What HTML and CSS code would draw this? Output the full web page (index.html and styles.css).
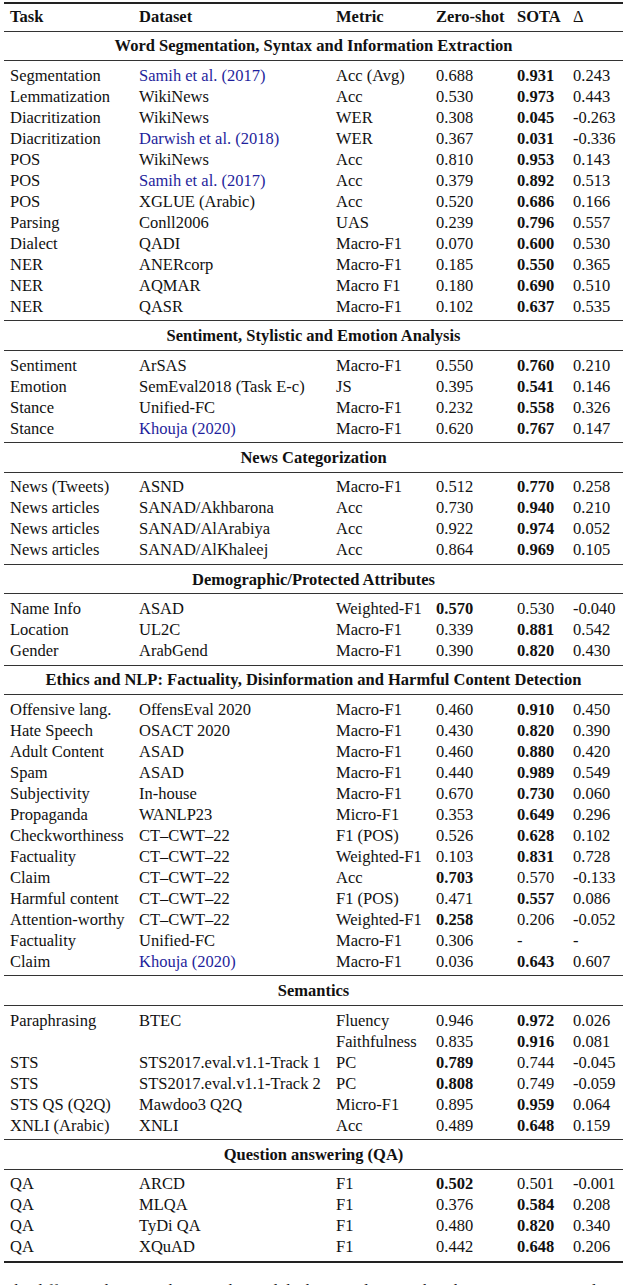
FILE: index.html
```html
<!DOCTYPE html>
<html lang="en">
<head>
<meta charset="utf-8">
<title>Results table</title>
<link rel="stylesheet" href="styles.css">
</head>
<body>
<div class="page">
<table class="results">
  <colgroup>
    <col class="c-task"><col class="c-data"><col class="c-metric"><col class="c-zero"><col class="c-sota"><col class="c-delta">
  </colgroup>
  <thead>
    <tr class="head"><th>Task</th><th>Dataset</th><th>Metric</th><th>Zero-shot</th><th>SOTA</th><th class="delta">Δ</th></tr>
  </thead>
  <tbody>
    <tr class="sec"><td colspan="6">Word Segmentation, Syntax and Information Extraction</td></tr>
    <tr class="first"><td>Segmentation</td><td><span class="cite">Samih et al. (2017)</span></td><td>Acc (Avg)</td><td>0.688</td><td><b>0.931</b></td><td>0.243</td></tr>
    <tr><td>Lemmatization</td><td>WikiNews</td><td>Acc</td><td>0.530</td><td><b>0.973</b></td><td>0.443</td></tr>
    <tr><td>Diacritization</td><td>WikiNews</td><td>WER</td><td>0.308</td><td><b>0.045</b></td><td>-0.263</td></tr>
    <tr><td>Diacritization</td><td><span class="cite">Darwish et al. (2018)</span></td><td>WER</td><td>0.367</td><td><b>0.031</b></td><td>-0.336</td></tr>
    <tr><td>POS</td><td>WikiNews</td><td>Acc</td><td>0.810</td><td><b>0.953</b></td><td>0.143</td></tr>
    <tr><td>POS</td><td><span class="cite">Samih et al. (2017)</span></td><td>Acc</td><td>0.379</td><td><b>0.892</b></td><td>0.513</td></tr>
    <tr><td>POS</td><td>XGLUE (Arabic)</td><td>Acc</td><td>0.520</td><td><b>0.686</b></td><td>0.166</td></tr>
    <tr><td>Parsing</td><td>Conll2006</td><td>UAS</td><td>0.239</td><td><b>0.796</b></td><td>0.557</td></tr>
    <tr><td>Dialect</td><td>QADI</td><td>Macro-F1</td><td>0.070</td><td><b>0.600</b></td><td>0.530</td></tr>
    <tr><td>NER</td><td>ANERcorp</td><td>Macro-F1</td><td>0.185</td><td><b>0.550</b></td><td>0.365</td></tr>
    <tr><td>NER</td><td>AQMAR</td><td>Macro F1</td><td>0.180</td><td><b>0.690</b></td><td>0.510</td></tr>
    <tr class="last"><td>NER</td><td>QASR</td><td>Macro-F1</td><td>0.102</td><td><b>0.637</b></td><td>0.535</td></tr>

    <tr class="sec"><td colspan="6">Sentiment, Stylistic and Emotion Analysis</td></tr>
    <tr class="first"><td>Sentiment</td><td>ArSAS</td><td>Macro-F1</td><td>0.550</td><td><b>0.760</b></td><td>0.210</td></tr>
    <tr><td>Emotion</td><td>SemEval2018 (Task E-c)</td><td>JS</td><td>0.395</td><td><b>0.541</b></td><td>0.146</td></tr>
    <tr><td>Stance</td><td>Unified-FC</td><td>Macro-F1</td><td>0.232</td><td><b>0.558</b></td><td>0.326</td></tr>
    <tr class="last"><td>Stance</td><td><span class="cite">Khouja (2020)</span></td><td>Macro-F1</td><td>0.620</td><td><b>0.767</b></td><td>0.147</td></tr>

    <tr class="sec"><td colspan="6">News Categorization</td></tr>
    <tr class="first"><td>News (Tweets)</td><td>ASND</td><td>Macro-F1</td><td>0.512</td><td><b>0.770</b></td><td>0.258</td></tr>
    <tr><td>News articles</td><td>SANAD/Akhbarona</td><td>Acc</td><td>0.730</td><td><b>0.940</b></td><td>0.210</td></tr>
    <tr><td>News articles</td><td>SANAD/AlArabiya</td><td>Acc</td><td>0.922</td><td><b>0.974</b></td><td>0.052</td></tr>
    <tr class="last"><td>News articles</td><td>SANAD/AlKhaleej</td><td>Acc</td><td>0.864</td><td><b>0.969</b></td><td>0.105</td></tr>

    <tr class="sec"><td colspan="6">Demographic/Protected Attributes</td></tr>
    <tr class="first"><td>Name Info</td><td>ASAD</td><td>Weighted-F1</td><td><b>0.570</b></td><td>0.530</td><td>-0.040</td></tr>
    <tr><td>Location</td><td>UL2C</td><td>Macro-F1</td><td>0.339</td><td><b>0.881</b></td><td>0.542</td></tr>
    <tr class="last"><td>Gender</td><td>ArabGend</td><td>Macro-F1</td><td>0.390</td><td><b>0.820</b></td><td>0.430</td></tr>

    <tr class="sec"><td colspan="6">Ethics and NLP: Factuality, Disinformation and Harmful Content Detection</td></tr>
    <tr class="first"><td>Offensive lang.</td><td>OffensEval 2020</td><td>Macro-F1</td><td>0.460</td><td><b>0.910</b></td><td>0.450</td></tr>
    <tr><td>Hate Speech</td><td>OSACT 2020</td><td>Macro-F1</td><td>0.430</td><td><b>0.820</b></td><td>0.390</td></tr>
    <tr><td>Adult Content</td><td>ASAD</td><td>Macro-F1</td><td>0.460</td><td><b>0.880</b></td><td>0.420</td></tr>
    <tr><td>Spam</td><td>ASAD</td><td>Macro-F1</td><td>0.440</td><td><b>0.989</b></td><td>0.549</td></tr>
    <tr><td>Subjectivity</td><td>In-house</td><td>Macro-F1</td><td>0.670</td><td><b>0.730</b></td><td>0.060</td></tr>
    <tr><td>Propaganda</td><td>WANLP23</td><td>Micro-F1</td><td>0.353</td><td><b>0.649</b></td><td>0.296</td></tr>
    <tr><td>Checkworthiness</td><td>CT–CWT–22</td><td>F1 (POS)</td><td>0.526</td><td><b>0.628</b></td><td>0.102</td></tr>
    <tr><td>Factuality</td><td>CT–CWT–22</td><td>Weighted-F1</td><td>0.103</td><td><b>0.831</b></td><td>0.728</td></tr>
    <tr><td>Claim</td><td>CT–CWT–22</td><td>Acc</td><td><b>0.703</b></td><td>0.570</td><td>-0.133</td></tr>
    <tr><td>Harmful content</td><td>CT–CWT–22</td><td>F1 (POS)</td><td>0.471</td><td><b>0.557</b></td><td>0.086</td></tr>
    <tr><td>Attention-worthy</td><td>CT–CWT–22</td><td>Weighted-F1</td><td><b>0.258</b></td><td>0.206</td><td>-0.052</td></tr>
    <tr><td>Factuality</td><td>Unified-FC</td><td>Macro-F1</td><td>0.306</td><td>-</td><td>-</td></tr>
    <tr class="last"><td>Claim</td><td><span class="cite">Khouja (2020)</span></td><td>Macro-F1</td><td>0.036</td><td><b>0.643</b></td><td>0.607</td></tr>

    <tr class="sec"><td colspan="6">Semantics</td></tr>
    <tr class="first"><td>Paraphrasing</td><td>BTEC</td><td>Fluency</td><td>0.946</td><td><b>0.972</b></td><td>0.026</td></tr>
    <tr><td></td><td></td><td>Faithfulness</td><td>0.835</td><td><b>0.916</b></td><td>0.081</td></tr>
    <tr><td>STS</td><td>STS2017.eval.v1.1-Track 1</td><td>PC</td><td><b>0.789</b></td><td>0.744</td><td>-0.045</td></tr>
    <tr><td>STS</td><td>STS2017.eval.v1.1-Track 2</td><td>PC</td><td><b>0.808</b></td><td>0.749</td><td>-0.059</td></tr>
    <tr><td>STS QS (Q2Q)</td><td>Mawdoo3 Q2Q</td><td>Micro-F1</td><td>0.895</td><td><b>0.959</b></td><td>0.064</td></tr>
    <tr class="last"><td>XNLI (Arabic)</td><td>XNLI</td><td>Acc</td><td>0.489</td><td><b>0.648</b></td><td>0.159</td></tr>

    <tr class="sec"><td colspan="6">Question answering (QA)</td></tr>
    <tr class="first"><td>QA</td><td>ARCD</td><td>F1</td><td><b>0.502</b></td><td>0.501</td><td>-0.001</td></tr>
    <tr><td>QA</td><td>MLQA</td><td>F1</td><td>0.376</td><td><b>0.584</b></td><td>0.208</td></tr>
    <tr><td>QA</td><td>TyDi QA</td><td>F1</td><td>0.480</td><td><b>0.820</b></td><td>0.340</td></tr>
    <tr class="last end"><td>QA</td><td>XQuAD</td><td>F1</td><td>0.442</td><td><b>0.648</b></td><td>0.206</td></tr>
  </tbody>
</table>
<p class="caption">the difference between the zero-shot and the best results in each task. QS: Question similarity</p>
</div>
</body>
</html>
```

FILE: styles.css
```css
html, body {
  margin: 0;
  padding: 0;
  background: #ffffff;
}

.page {
  padding: 2px 17px 0 4px;
  font-family: "Liberation Serif", "Times New Roman", serif;
  font-size: 16.5px;
  color: #111111;
}

.results {
  width: 619px;
  border-collapse: collapse;
  table-layout: fixed;
  border-top: 2px solid #222222;
}

.c-task { width: 129px; }
.c-data { width: 197px; }
.c-metric { width: 100px; }
.c-zero { width: 81px; }
.c-sota { width: 56px; }
.c-delta { width: 56px; }

.results th,
.results td {
  padding: 0 0 0 6px;
  line-height: 21px;
  height: 21px;
  text-align: left;
  white-space: nowrap;
  font-weight: normal;
}

.results b {
  font-weight: bold;
}

.head th {
  font-weight: bold;
  padding-top: 2px;
  padding-bottom: 3.7px;
}

.head th.delta {
  font-weight: normal;
}

.sec td {
  font-weight: bold;
  text-align: center;
  padding: 3.7px 0;
  border-top: 1px solid #333333;
  border-bottom: 1px solid #333333;
}

.first td {
  padding-top: 3.7px;
}

.last td {
  padding-bottom: 3.7px;
}

.end td {
  border-bottom: 2px solid #222222;
}

.cite {
  color: #1f1f9c;
}

.caption {
  margin: 17px 0 0 6px;
  line-height: 21px;
  white-space: nowrap;
  overflow: hidden;
}
```
